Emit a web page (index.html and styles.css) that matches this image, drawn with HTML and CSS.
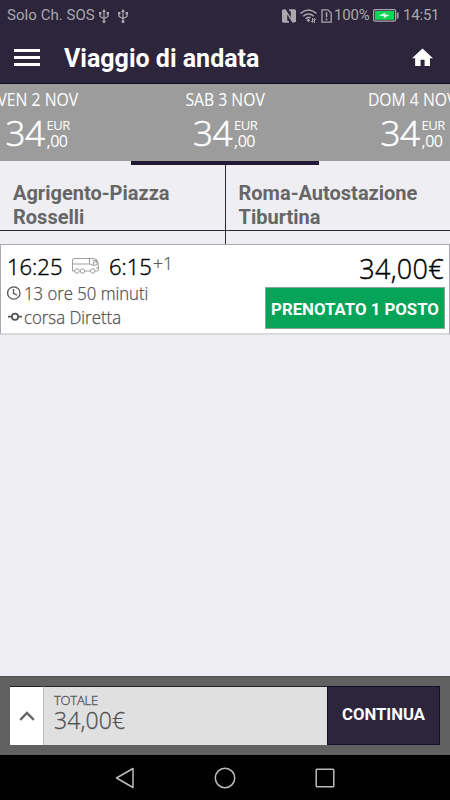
FILE: index.html
```html
<!DOCTYPE html>
<html lang="it">
<head>
<meta charset="utf-8">
<title>Viaggio di andata</title>
<link rel="stylesheet" href="styles.css">
</head>
<body>
<div class="status">
  <span class="carrier">Solo Ch. SOS</span>
  <svg class="usb" width="10" height="14" viewBox="0 0 10 14"><path d="M5 1v11M1 4v3.5l4 2 4-2V4" fill="none" stroke="#aaa7ae" stroke-width="1.2"/><path d="M5 0l2 3H3zM0 3h2.4v2.4H0zM7.6 3H10v2.4H7.6z" fill="#aaa7ae"/><circle cx="5" cy="12.4" r="1.5" fill="#aaa7ae"/></svg>
  <svg class="usb" width="10" height="14" viewBox="0 0 10 14"><path d="M5 1v11M1 4v3.5l4 2 4-2V4" fill="none" stroke="#aaa7ae" stroke-width="1.2"/><path d="M5 0l2 3H3zM0 3h2.4v2.4H0zM7.6 3H10v2.4H7.6z" fill="#aaa7ae"/><circle cx="5" cy="12.4" r="1.5" fill="#aaa7ae"/></svg>
  <svg class="nfc" width="14" height="14" viewBox="0 0 14 14"><path d="M0 .8L3.500.2 8.800 8.500V2.600L7 1.800V.3h5.500L14 1v12l-3.500.8L5.200 5.500v6l1.800.8v1.500H1.500L0 13z" fill="#aaa7ae"/></svg>
  <svg class="wifi" width="17" height="14" viewBox="0 0 17 14"><g fill="none" stroke="#aaa7ae" stroke-width="1.5"><path d="M.6 4.300Q8.500-2.300 16.400 4.300M3.200 7.200Q8.500 2.700 13.800 7.200M5.700 9.900Q8.500 7.400 10.500 9"/></g><path d="M8.500 9.700l1.700 1.600-1.700 2-1.900-2zM12 9h1v3h1l-1.600 2-1.600-2H12zM15 14h-1v-3h-1l1.600-2 1.600 2H15z" fill="#aaa7ae"/></svg>
  <svg class="sim" width="11" height="14" viewBox="0 0 11 14"><path d="M1 .8h5.800L10.200 4v9.200H1z" fill="none" stroke="#aaa7ae" stroke-width="1.300"/><path d="M5.500 3.200v5M5.500 9.500v1.700" stroke="#aaa7ae" stroke-width="1.600"/></svg>
  <span class="percent">100%</span>
  <svg class="battery" width="26" height="13" viewBox="0 0 26 13"><rect x=".6" y=".6" width="22" height="11.600" rx="1.500" fill="none" stroke="#aaa7ae" stroke-width="1.200"/><rect x="2" y="2" width="19.200" height="8.800" fill="#0bd755"/><path d="M23.800 3.500h1.700v6h-1.700z" fill="#aaa7ae"/><path d="M5.500 6.500l7-2.800-.4 2H17l-6.500 3.600.5-2.400z" fill="#e3f8e9"/></svg>
  <span class="clock">14:51</span>
</div>
<header class="header">
  <div class="burger"><i></i><i></i><i></i></div>
  <h1>Viaggio di andata</h1>
  <svg class="home" width="21" height="19" viewBox="0 0 22 19"><path d="M11 0l11 10.200h-3.200V18.400h-5.600v-6.600H9v6.600H3.300v-8.200H0z" fill="#fff"/></svg>
</header>
<nav class="dates">
  <div class="date"><div class="day">VEN 2 NOV</div><div class="fare"><b>34</b><span class="cents"><span class="eur">EUR</span><span class="dec">,00</span></span></div></div>
  <div class="date current"><div class="day">SAB 3 NOV</div><div class="fare"><b>34</b><span class="cents"><span class="eur">EUR</span><span class="dec">,00</span></span></div></div>
  <div class="date"><div class="day">DOM 4 NOV</div><div class="fare"><b>34</b><span class="cents"><span class="eur">EUR</span><span class="dec">,00</span></span></div></div>
</nav>
<section class="route">
  <div class="stop">Agrigento-Piazza<br>Rosselli</div>
  <div class="stop">Roma-Autostazione<br>Tiburtina</div>
</section>
<article class="card">
  <div class="trip">
    <div class="times"><span class="depart">16:25</span>
      <svg class="bus" width="27" height="16" viewBox="0 0 27 16"><g fill="none" stroke="#888" stroke-width=".8"><path d="M3 13H.5V2Q.5.500 2 .5h20q3 0 4 4l.5 6.500q0 2-2 2H23M18.500 13H13M.5 6h17l4 1.500M17.500.5V6M20.500 2.500h4.500M21 4.500l4-1v3l-3 1zM24 10h2.500"/><circle cx="5" cy="13" r="2.200"/><circle cx="10.500" cy="13" r="2.200"/><circle cx="20.700" cy="13" r="2.200"/></g></svg>
      <span class="arrive">6:15</span><span class="plus">+1</span></div>
    <div class="info"><svg width="15" height="15" viewBox="0 0 15 15"><g fill="none" stroke="#555" stroke-width="1.300"><circle cx="6.800" cy="7" r="6.200"/><path d="M6.500 3v4.300l3.500 2"/></g></svg><span class="duration">13 ore 50 minuti</span></div>
    <div class="info"><svg width="15" height="15" viewBox="0 0 15 15"><g fill="none" stroke="#555" stroke-width="1.800"><circle cx="8" cy="6.700" r="3.100"/><path d="M1 6.700h4M11 6.700h4"/></g></svg><span class="direct">corsa Diretta</span></div>
  </div>
  <div class="booking">
    <div class="price">34,00€</div>
    <div class="booked"><span>PRENOTATO 1 POSTO</span></div>
  </div>
</article>
<main class="space"></main>
<footer class="checkout">
  <div class="expand"><svg width="16" height="10" viewBox="0 0 16 10"><path d="M1.200 8.800L8 2l6.800 6.800" fill="none" stroke="#666" stroke-width="2.400"/></svg></div>
  <div class="total"><span class="label">TOTALE</span><span class="amount">34,00€</span></div>
  <div class="continue"><span>CONTINUA</span></div>
</footer>
<div class="softkeys">
  <svg width="20" height="22" viewBox="0 0 20 22"><path d="M18 1.500v19L1.500 11z" fill="none" stroke="#bbb" stroke-width="1.500" stroke-linejoin="round"/></svg>
  <svg width="22" height="22" viewBox="0 0 22 22"><circle cx="11" cy="11" r="9.700" fill="none" stroke="#bbb" stroke-width="1.500"/></svg>
  <svg width="20" height="20" viewBox="0 0 20 20"><rect x="1.200" y="1.200" width="17.600" height="17.600" rx=".8" fill="none" stroke="#bbb" stroke-width="1.500"/></svg>
</div>
</body>
</html>
```
FILE: styles.css
```css
* { box-sizing: border-box; }
html { overflow: hidden; }
body {
  margin: 0;
  width: 450px;
  height: 800px;
  overflow: hidden;
  display: flex;
  flex-direction: column;
  background: #efeef3;
  font-family: "Open Sans", "Noto Sans", sans-serif;
  font-weight: 300;
}
svg { display: block; flex: none; }
span { white-space: nowrap; }

.status {
  height: 31px;
  padding-left: 7px;
  display: flex;
  align-items: center;
  background: #2c253b;
  color: #aaa7ae;
  font: 400 15px/31px Roboto, sans-serif;
}
.carrier { width: 92px; letter-spacing: .05px; }
.usb { margin-right: 9px; }
.nfc { margin-left: 145px; }
.wifi { margin-left: 4px; }
.sim { margin-left: 4px; }
.percent { width: 39px; margin-left: 2px; letter-spacing: -.2px; }
.clock { margin-left: 4px; letter-spacing: -.2px; }

.header {
  height: 53px;
  display: flex;
  align-items: center;
  padding: 0 17px 0 14px;
  background: #2c253b;
  border-bottom: 1px solid #111024;
}
.burger { width: 26px; display: grid; gap: 4px; }
.burger i { height: 3px; background: #fff; }
.header h1 {
  margin: 3px 0 0 24px;
  color: #fff;
  font: 700 25px/30px Roboto, sans-serif;
}
.home { margin-left: auto; }

.dates {
  height: 77px;
  display: grid;
  grid-template-columns: repeat(3, 187.500px);
  justify-content: center;
  overflow-x: clip;
  background: #9c9c9c;
  color: #fff;
}
.date { height: 77px; display: flex; flex-direction: column; align-items: center; font-weight: 400; }
.day {
  height: 24px;
  margin-top: 4px;
  font-size: 17.500px;
  line-height: 23px;
  white-space: nowrap;
  transform: scaleX(.9);
}
.fare { display: flex; height: 42px; }
.fare b { font-size: 35px; line-height: 41px; font-weight: 300; letter-spacing: -.5px; -webkit-text-stroke: .6px; }
.cents { display: flex; flex-direction: column; width: 23px; margin-left: 2px; padding-top: 6px; }
.eur { font-size: 13px; line-height: 15px; letter-spacing: -.5px; }
.dec { font-size: 16px; line-height: 16px; letter-spacing: -.5px; }
.current { height: 81px; box-shadow: inset 0 -4px #211936; position: relative; }

.route {
  height: 83px;
  display: grid;
  grid-template-columns: 225px 225px;
  grid-template-rows: 70px;
  background: linear-gradient(#2c2937, #2c2937) 225px 0 / 1px 83px no-repeat;
}
.stop {
  padding: 20px 0 0 13px;
  border-bottom: 1px solid #2c2937;
  color: #666;
  font: 700 20px/24px Roboto, sans-serif;
}
.stop + .stop { padding-left: 13.500px; }

.card {
  height: 91px;
  display: flex;
  justify-content: space-between;
  background: #fff;
  border: 1px solid #aaa9af;
  border-bottom: 2px solid #d9d9dd;
}
.trip { padding: 7px 0 0 6px; }
.times { display: flex; height: 29px; line-height: 29px; color: #000; font-size: 22px; -webkit-text-stroke: .4px; }
.depart { width: 65px; }
.bus { margin: 6px 0 0; }
.arrive { margin-left: 10px; width: 44px; }
.plus { font-size: 17.500px; line-height: 22px; color: #555; -webkit-text-stroke: .2px; }
.info { height: 24px; display: flex; align-items: center; color: #505050; font-size: 17.500px; line-height: 24px; -webkit-text-stroke: .25px; }
.info span { margin-left: 2px; transform-origin: left; }
.duration { transform: scaleX(.955); }
.direct { transform: scaleX(.96); }
.booking { padding: 7px 4px 0 0; display: flex; flex-direction: column; align-items: flex-end; }
.price { height: 35px; margin-right: 1px; font-size: 27px; line-height: 34px; letter-spacing: .3px; color: #000; -webkit-text-stroke: .4px; }
.booked {
  width: 180px;
  height: 42px;
  padding-top: 2px;
  display: flex;
  justify-content: center;
  align-items: center;
  background: #05a459;
  border: 1px solid #8aa796;
  color: #fff;
  font: 700 16.800px/20px Roboto, sans-serif;
}

.space { flex: 1; }
.checkout {
  height: 79px;
  padding: 9px 10px 10px;
  display: flex;
  background: #616161;
  border-top: 1px solid #4d4d4d;
}
.expand { width: 34px; display: flex; justify-content: center; align-items: center; background: #fff; border-right: 1px solid #bbb; border-top: 1px solid #222; }
.total {
  width: 283px;
  padding: 3px 0 0 10px;
  display: flex;
  flex-direction: column;
  background: #e0e0e0;
  border-top: 1px solid #222;
  color: #505050;
  -webkit-text-stroke: .3px;
}
.label { font-size: 13px; line-height: 20px; letter-spacing: -.2px; }
.amount { font-size: 23px; line-height: 21px; letter-spacing: .1px; }
.continue {
  flex: 1;
  padding-bottom: 1px;
  display: flex;
  justify-content: center;
  align-items: center;
  background: #2c253b;
  border: 1px solid #160d2c;
  color: #fff;
  font: 700 16.700px/20px Roboto, sans-serif;
}
.softkeys {
  height: 45px;
  display: flex;
  justify-content: center;
  align-items: center;
  gap: 79px;
  background: #000;
}
```
